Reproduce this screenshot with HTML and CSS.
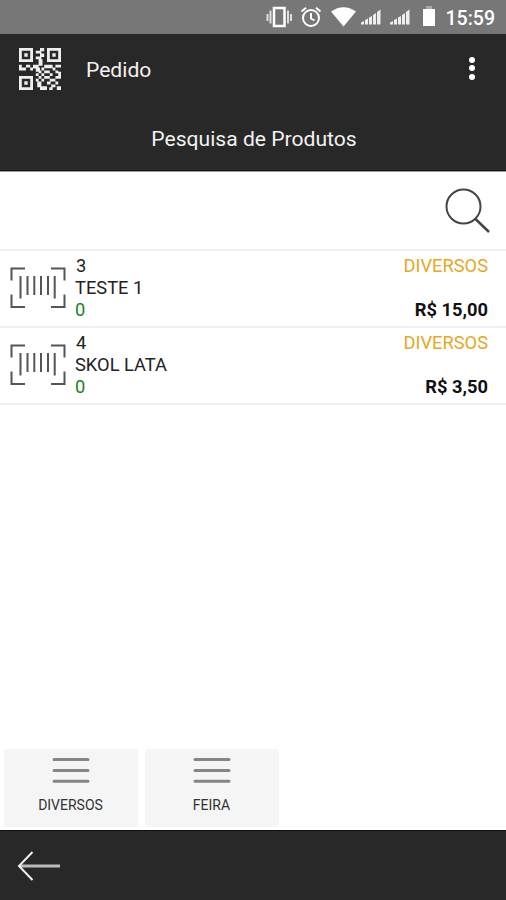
FILE: index.html
```html
<!DOCTYPE html>
<html lang="pt-BR">
<head>
<meta charset="utf-8">
<title>Pedido</title>
<link rel="stylesheet" href="styles.css">
</head>
<body>
<svg class="defs" width="0" height="0" aria-hidden="true">
  <symbol id="signal" viewBox="0 0 21 16"><path d="M0 15.500v-2l3-1.500v3.500zM4 15.500v-4.500l3-1.500v6zM8 15.500v-7l3-1.500v8.500zM12 15.500V6l3-2v11.500zM16 15.500V3l3.500-2.500v15z"/></symbol>
  <symbol id="barcode" viewBox="0 0 56 42"><path d="M1.500 13.500V1.500H15M41 1.500h13.500v12M1.500 27.500v12.500H15M41 40h13.500V27.500M10.500 9v22.500M17.500 9v19M24.300 9v19M31 9v19M38 9v19M44.700 9v22.500"/></symbol>
  <symbol id="menu" viewBox="0 0 38 28"><path d="M2 2.500h34M2 13.500h34M2 24.200h34"/></symbol>
</svg>
<div class="screen">
  <div class="status">
    <svg class="vibrate" viewBox="0 0 26 22"><path class="body" d="M8 2h10.500v18H8z"/><path class="wave" d="M4.500 4.500v13M1.500 8v7M22 4.500v13M25 8v7"/></svg>
    <svg class="alarm" viewBox="0 0 22 22"><circle cx="11" cy="12" r="8"/><path d="M11 7v5.500l3.500 2M1.500 5.500 6 1.800M20.500 5.500 16 1.800"/></svg>
    <svg class="wifi" viewBox="0 0 25 20"><path d="M0 4.500Q12.500-4 25 4.500L12.500 19.500z"/></svg>
    <svg class="signal"><use href="#signal"/></svg>
    <svg class="signal second"><use href="#signal"/></svg>
    <svg class="battery" viewBox="0 0 12 20"><path d="M0 3h12v17H0z"/><path class="cap" d="M3 0h6v3H3z"/></svg>
    <span class="clock">15:59</span>
  </div>
  <header class="header">
    <div class="bar">
      <svg class="qr" viewBox="0 0 15 15">
        <path class="finder" d="M.5.500h4v4h-4zM10.500.500h4v4h-4zM.5 10.500h4v4h-4z"/>
        <path d="M1.900 1.900h1.200v1.200H1.900zM11.900 1.900h1.200v1.200h-1.200zM1.900 11.900h1.200v1.200H1.900zM7.500 0H9v1.200H7.500zM6 1h2v1H6zM7.500 2H9v1.200H7.500zM6 3h2v1H6zM7 4h1.400v2.300H7zM0 6h1v2H0zM1 7h1.500v1H1zM2.500 6H4v1H2.500zM4 7h1v1H4zM5 6h2v1.300H5zM9 6h3v1.200H9zM13 6h2v1h-2zM6 7h1.500v1.500H6zM8 7h1v1H8zM12 7h1v1h-1zM7 8h1v1H7zM9 8h2v1H9zM13 8h1v1h-1zM6 9h1v1H6zM8 9h1v1H8zM11 9h1v1h-1zM14 8.500h1V11h-2v-1h1zM7 10h1v1H7zM9 10h2v1H9zM6 11h1v1H6zM8 11h1v1H8zM11 11h2v1h-2zM6.500 12H8v2H6.500zM10 12h1.300v1H10zM13 12h1v1h-1zM7.500 13.700H10V15H7.500zM11.500 13H13v1h-1.500zM10.800 14h1.200v1h-1.200zM13.500 13.700H15V15h-1.500z"/>
      </svg>
      <h1 class="title">Pedido</h1>
      <div class="more"><i></i><i></i><i></i></div>
    </div>
    <h2 class="subtitle">Pesquisa de Produtos</h2>
  </header>
  <div class="search">
    <svg class="lens" viewBox="0 0 46 46"><circle cx="18.500" cy="18.500" r="17"/><path class="handle" d="M30.500 31 44 44"/></svg>
  </div>
  <main class="list">
    <article class="item">
      <svg class="barcode"><use href="#barcode"/></svg>
      <div class="info"><span class="code">3</span><span>TESTE 1</span><span class="stock">0</span></div>
      <div class="side"><span class="category">DIVERSOS</span><strong>R$ 15,00</strong></div>
    </article>
    <article class="item">
      <svg class="barcode"><use href="#barcode"/></svg>
      <div class="info"><span class="code">4</span><span>SKOL LATA</span><span class="stock">0</span></div>
      <div class="side"><span class="category">DIVERSOS</span><strong>R$ 3,50</strong></div>
    </article>
  </main>
  <nav class="tabs">
    <div class="tab"><svg class="menu"><use href="#menu"/></svg><span>DIVERSOS</span></div>
    <div class="tab"><svg class="menu"><use href="#menu"/></svg><span>FEIRA</span></div>
  </nav>
  <footer class="footer">
    <svg class="back" viewBox="0 0 44 30"><path class="shaft" d="M3 15h40"/><path d="M15.500 1 2 15l13.500 14"/></svg>
  </footer>
</div>
</body>
</html>
```
FILE: styles.css
```css
* { box-sizing: border-box; }
body { margin: 0; background: #fff; color: #222; font-family: Roboto, sans-serif; }
svg { display: block; flex: none; fill: none; }
.defs { position: absolute; }
.screen { width: 506px; height: 900px; display: flex; flex-direction: column; }

.status { height: 34px; background: #777; display: flex; align-items: center; justify-content: flex-end; padding-right: 11px; color: #fff; }
.vibrate { width: 26px; height: 22px; margin-right: 8px; stroke: #fff; }
.vibrate .body { stroke-width: 2.5; }
.vibrate .wave { stroke-width: 2; opacity: .75; }
.alarm { width: 22px; height: 22px; margin-right: 9px; stroke: #fff; stroke-width: 2; }
.wifi { width: 25px; height: 20px; margin-right: 5px; fill: #fff; }
.signal { width: 21px; height: 16px; margin-right: 8px; fill: #eee; }
.signal.second { margin-right: 12px; }
.battery { width: 12px; height: 20px; margin-right: 11px; margin-top: -2px; fill: #fff; }
.battery .cap { fill: #aaa; }
.clock { font-size: 19.5px; font-weight: 500; line-height: 34px; margin-top: 3px; }

.header { height: 137px; background: #282828; color: #f2f2f2; border-bottom: 1px solid #151515; }
.bar { height: 70px; display: flex; align-items: center; padding: 0 31px 0 19px; }
.qr { width: 42px; height: 42px; fill: #eee; }
.qr .finder { fill: none; stroke: #eee; stroke-width: 1; }
.title, .subtitle { margin: 0; font-size: 21.100px; font-weight: 400; }
.title { margin-left: 25px; flex: 1; }
.more { display: flex; flex-direction: column; gap: 2.500px; margin-top: -2px; }
.more i { width: 6px; height: 6px; border-radius: 50%; background: #fff; }
.subtitle { text-align: center; line-height: 69px; margin-left: 2px; }

.search { height: 80px; border-bottom: 2px solid #f0f0f0; display: flex; justify-content: flex-end; padding: 16px 15px 0 0; border-top: 1px solid #999; }
.lens { width: 46px; height: 46px; stroke: #444; stroke-width: 2; }
.lens .handle { stroke-width: 2.500; }

.list { flex: 1; font-size: 18.300px; line-height: 22px; }
.item { height: 77px; border-bottom: 2px solid #f0f0f0; display: flex; padding: 4px 18px 0 10px; }
.barcode { width: 56px; height: 42px; margin-top: 12px; stroke: #555; stroke-width: 2; }
.info { display: flex; flex-direction: column; margin-left: 9px; flex: 1; }
.info .code { padding-left: 1px; }
.stock { color: #15851d; }
.side { display: flex; flex-direction: column; align-items: flex-end; justify-content: space-between; height: 66px; }
.category { color: #e5a823; }
.side strong { color: #111; font-weight: 700; }

.tabs { height: 81px; display: flex; gap: 7px; padding-left: 4px; }
.tab { width: 134px; height: 78px; background: #f5f5f5; border-radius: 3px; display: flex; flex-direction: column; align-items: center; padding: 8px 1px 0 0; font-size: 14px; line-height: 18px; color: #333; }
.menu { width: 38px; height: 28px; margin-bottom: 11px; stroke: #858585; stroke-width: 3; stroke-linecap: round; }

.footer { height: 70px; background: #282828; border-top: 1px solid #111; padding: 20px 0 0 17px; }
.back { width: 44px; height: 30px; stroke: #eee; stroke-width: 2; }
.back .shaft { stroke: #bbb; stroke-width: 3; }
```
